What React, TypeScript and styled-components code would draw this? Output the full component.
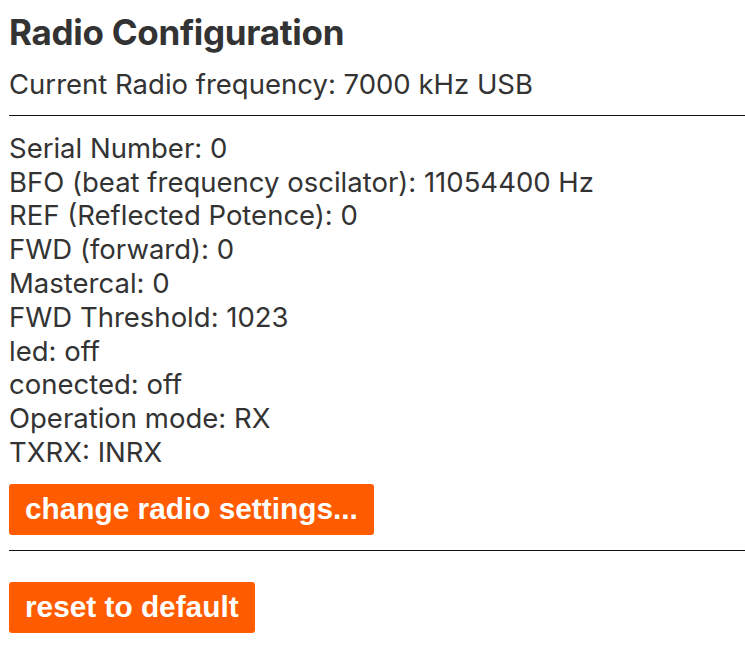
import React from "react";
import styled, { createGlobalStyle } from "styled-components";

const Global = createGlobalStyle`
  html, body { margin: 0; padding: 0; background: #fff; }
  body { font-family: Inter, "Noto Sans", sans-serif; color: #333; }
`;

const Page = styled.div`
  padding: 11px 0 0 9px;
  display: flex;
  flex-direction: column;
  align-items: flex-start;
`;

const Title = styled.h1`
  margin: 0 0 15px;
  font-size: 35px;
  font-weight: 700;
  line-height: 42px;
  letter-spacing: -0.3px;
  color: #333;
`;

const Line = styled.p`
  margin: 0;
  font-size: 27.5px;
  line-height: 33.8px;
  font-weight: 400;
  color: #333;
`;

const Rule = styled.hr<{ $before: number; $after: number }>`
  align-self: stretch;
  border: 0;
  border-top: 1px solid #111;
  margin: ${(p) => p.$before}px 0 ${(p) => p.$after}px;
  height: 0;
`;

const Section = styled.div`
  display: flex;
  flex-direction: column;
`;

const Button = styled.button`
  font-family: "Liberation Sans", Arial, sans-serif;
  font-weight: 700;
  font-size: 29.8px;
  color: #fff;
  background: #ff5b00;
  border: 0;
  border-radius: 3px;
  height: 51px;
  padding: 0 16px;
  cursor: pointer;
`;

const ButtonRow = styled.div<{ $top: number }>`
  margin-top: ${(p) => p.$top}px;
  display: flex;
`;

const fields: [string, string][] = [
  ["Serial Number", "0"],
  ["BFO (beat frequency oscilator)", "11054400 Hz"],
  ["REF (Reflected Potence)", "0"],
  ["FWD (forward)", "0"],
  ["Mastercal", "0"],
  ["FWD Threshold", "1023"],
  ["led", "off"],
  ["conected", "off"],
  ["Operation mode", "RX"],
  ["TXRX", "INRX"],
];

export default function App() {
  return (
    <>
      <Global />
      <Page>
        <Title>Radio Configuration</Title>
        <Line>Current Radio frequency: 7000 kHz USB</Line>
        <Rule $before={13} $after={16} />
        <Section>
          {fields.map(([k, v]) => (
            <Line key={k}>
              {k}: {v}
            </Line>
          ))}
        </Section>
        <ButtonRow $top={14}>
          <Button>change radio settings...</Button>
        </ButtonRow>
        <Rule $before={15} $after={0} />
        <ButtonRow $top={31}>
          <Button>reset to default</Button>
        </ButtonRow>
      </Page>
    </>
  );
}
